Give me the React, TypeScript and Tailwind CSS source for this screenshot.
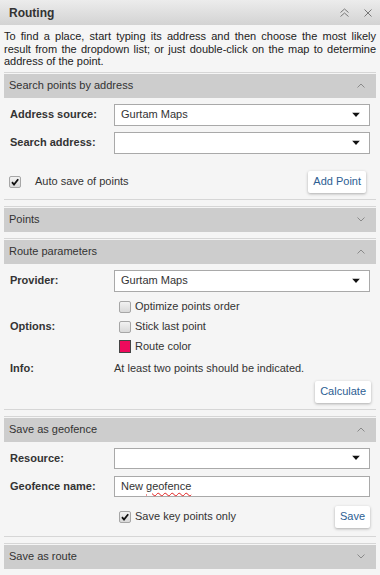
import React from "react";

const font = { fontFamily: '"Liberation Sans", Arial, sans-serif' };

function ChevronUp() {
  return (
    <svg width="8" height="5" viewBox="0 0 8 5">
      <polyline points="0.5,4.5 4,1 7.5,4.5" fill="none" stroke="#8a8a8a" strokeWidth="1" />
    </svg>
  );
}
function ChevronDown() {
  return (
    <svg width="8" height="5" viewBox="0 0 8 5">
      <polyline points="0.5,0.5 4,4 7.5,0.5" fill="none" stroke="#8a8a8a" strokeWidth="1" />
    </svg>
  );
}

function SectionHeader({ title, open }: { title: string; open: boolean }) {
  return (
    <div className="mt-[6px] border-t border-[#d6d6d6] pt-[1px]">
      <div className="h-[24px] bg-[#cdcdcd] flex items-center justify-between pl-[5px] pr-[11px] text-[11px] text-[#333]">
        <span>{title}</span>
        {open ? <ChevronUp /> : <ChevronDown />}
      </div>
    </div>
  );
}

function SelectBox({ value, h = 22 }: { value?: string; h?: number }) {
  return (
    <div
      className="flex-1 relative bg-white border border-[#a9a9a9] flex items-center pl-[6px] text-[11px] text-[#333]"
      style={{ height: h }}
    >
      <span>{value}</span>
      <svg className="absolute right-[9px] top-1/2 -translate-y-1/2" width="8" height="5" viewBox="0 0 8 5">
        <polygon points="0,0 8,0 4,4.5" fill="#111" />
      </svg>
    </div>
  );
}

function Checkbox({ checked }: { checked?: boolean }) {
  return (
    <div className="w-[12px] h-[12px] rounded-[2px] border border-[#a6a6a6] bg-gradient-to-b from-[#f2f2f2] to-[#d9d9d9] flex items-center justify-center shrink-0">
      {checked && (
        <svg width="10" height="10" viewBox="0 0 10 10">
          <path d="M2 5.2 L4 7.5 L8.2 2.2" fill="none" stroke="#111" strokeWidth="1.8" />
        </svg>
      )}
    </div>
  );
}

function Btn({ children }: { children: React.ReactNode }) {
  return (
    <div className="h-[22px] px-[5px] bg-white flex items-center text-[11px] text-[#2c5e93] rounded-[2px] shadow-[0_1px_3px_rgba(0,0,0,0.3)]">
      {children}
    </div>
  );
}

function Label({ children }: { children: React.ReactNode }) {
  return <div className="w-[110px] shrink-0 pl-[6px] font-bold text-[11px] text-[#333]">{children}</div>;
}

export default function App() {
  return (
    <div className="w-[380px] min-h-[575px] bg-[#f5f5f5]" style={font}>
      <div className="h-[25px] bg-gradient-to-b from-[#ececec] to-[#d3d3d3] flex items-center justify-between pl-[9px] pr-[8px]">
        <span className="text-[12px] font-bold text-[#333]">Routing</span>
        <div className="flex items-center gap-[15px]">
          <svg width="9" height="10" viewBox="0 0 9 10">
            <polyline points="0.5,4.5 4.5,1 8.5,4.5" fill="none" stroke="#777" strokeWidth="1" />
            <polyline points="0.5,8.5 4.5,5 8.5,8.5" fill="none" stroke="#777" strokeWidth="1" />
          </svg>
          <svg width="8" height="8" viewBox="0 0 8 8">
            <line x1="0.5" y1="0.5" x2="7.5" y2="7.5" stroke="#777" strokeWidth="1" />
            <line x1="7.5" y1="0.5" x2="0.5" y2="7.5" stroke="#777" strokeWidth="1" />
          </svg>
        </div>
      </div>

      <div className="px-[4px] pt-[5px] text-[11px] leading-[12.5px] text-justify text-[#222]">
        To find a place, start typing its address and then choose the most likely result from the dropdown list; or just double-click on the map to determine address of the point.
      </div>

      <div className="mx-[4px]">
        <div className="-mt-[2px]">
          <SectionHeader title="Search points by address" open />
        </div>
        <div className="pt-[6px] pb-[6px] border-b border-[#d6d6d6] pr-[6px]">
          <div className="flex items-center">
            <Label>Address source:</Label>
            <SelectBox value="Gurtam Maps" />
          </div>
          <div className="flex items-center mt-[6px]">
            <Label>Search address:</Label>
            <SelectBox />
          </div>
          <div className="flex items-center justify-between mt-[17px] pl-[5px] pr-[4px]">
            <div className="flex items-center gap-[14px] text-[11px] text-[#333]">
              <Checkbox checked />
              <span>Auto save of points</span>
            </div>
            <Btn>Add Point</Btn>
          </div>
        </div>

        <SectionHeader title="Points" open={false} />

        <SectionHeader title="Route parameters" open />
        <div className="pt-[6px] pb-[6px] border-b border-[#d6d6d6] pr-[5px]">
          <div className="flex items-center pr-[1px]">
            <Label>Provider:</Label>
            <SelectBox value="Gurtam Maps" />
          </div>
          <div className="flex items-center mt-[5px]">
            <Label>Options:</Label>
            <div className="flex flex-col text-[11px] text-[#333] pl-[5px]">
              <div className="h-[20px] flex items-center gap-[4px]">
                <Checkbox />
                <span>Optimize points order</span>
              </div>
              <div className="h-[20px] flex items-center gap-[4px]">
                <Checkbox />
                <span>Stick last point</span>
              </div>
              <div className="h-[20px] flex items-center gap-[4px]">
                <div className="w-[12px] h-[13px] bg-[#ee0a5c] border border-[#444] shrink-0" />
                <span>Route color</span>
              </div>
            </div>
          </div>
          <div className="flex items-center h-[20px] mt-[2px]">
            <Label>Info:</Label>
            <span className="text-[11px] text-[#333]">At least two points should be indicated.</span>
          </div>
          <div className="flex justify-end mt-[2px]">
            <Btn>Calculate</Btn>
          </div>
        </div>

        <SectionHeader title="Save as geofence" open />
        <div className="pt-[6px] pb-[8px] border-b border-[#d6d6d6] pr-[6px]">
          <div className="flex items-center">
            <Label>Resource:</Label>
            <SelectBox h={21} />
          </div>
          <div className="flex items-center mt-[7px]">
            <Label>Geofence name:</Label>
            <div className="flex-1 h-[21px] bg-white border border-[#a9a9a9] flex items-center pl-[6px] text-[11px] text-[#333]">
              New{" "}
              <span className="ml-[3px] underline decoration-wavy decoration-[#e02020] decoration-1 underline-offset-2">
                geofence
              </span>
            </div>
          </div>
          <div className="flex items-center justify-between mt-[9px] pl-[115px]">
            <div className="flex items-center gap-[4px] text-[11px] text-[#333]">
              <Checkbox checked />
              <span>Save key points only</span>
            </div>
            <Btn>Save</Btn>
          </div>
        </div>

        <SectionHeader title="Save as route" open={false} />
      </div>
    </div>
  );
}
